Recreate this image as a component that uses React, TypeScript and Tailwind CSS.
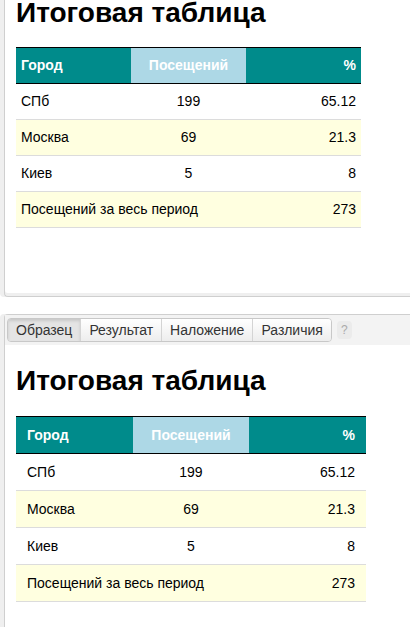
import React from 'react';

type Row = { city: string; visits: string; pct: string };

const rows: Row[] = [
  { city: 'СПб', visits: '199', pct: '65.12' },
  { city: 'Москва', visits: '69', pct: '21.3' },
  { city: 'Киев', visits: '5', pct: '8' },
];

function SummaryTable({ wide }: { wide?: boolean }) {
  const pad = wide ? 'px-[11px]' : 'px-[5px]';
  const head = wide ? 'h-[37px]' : 'h-[36px]';
  const cell = wide ? 'h-[37px]' : 'h-[36px]';
  return (
    <table className={`${wide ? 'w-[350px]' : 'w-[345px]'} table-fixed border-collapse text-[14px] text-black`}>
      <thead>
        <tr className={`${head} border-y border-black bg-[#008b8b] text-white font-bold`}>
          <th className={`${pad} text-left`}>Город</th>
          <th className={`${pad} bg-[#add8e6] text-center`}>Посещений</th>
          <th className={`${pad} text-right`}>%</th>
        </tr>
      </thead>
      <tbody>
        {rows.map((r, i) => (
          <tr key={r.city} className={`${cell} border-b border-[#dcdcdc] ${i % 2 === 1 ? 'bg-[#ffffe0]' : 'bg-white'}`}>
            <td className={`${pad} text-left`}>{r.city}</td>
            <td className={`${pad} text-center`}>{r.visits}</td>
            <td className={`${pad} text-right`}>{r.pct}</td>
          </tr>
        ))}
        <tr className={`${cell} border-b border-[#dcdcdc] bg-[#ffffe0]`}>
          <td colSpan={2} className={`${pad} text-left`}>Посещений за весь период</td>
          <td className={`${pad} text-right`}>273</td>
        </tr>
      </tbody>
    </table>
  );
}

export default function App() {
  const tabs = ['Образец', 'Результат', 'Наложение', 'Различия'];

  return (
    <div className="relative h-[627px] w-[410px] overflow-hidden bg-white font-['Liberation_Sans',Arial,sans-serif]">
      {/* sample panel */}
      <div className="-mt-[3px] ml-[4px] h-[300px] w-[420px] rounded-bl-[4px] border-b border-l border-[#cfcfcf] bg-white pl-[11px] shadow-[inset_0_-3px_0_#efefef,-4px_0_0_#efefef]">
        <h1 className="text-[28px] font-bold leading-[32px] text-black">Итоговая таблица</h1>
        <div className="mt-[18px]">
          <SummaryTable />
        </div>
      </div>

      {/* result panel with tabs */}
      <div className="ml-[4px] mt-[17px] h-[320px] w-[420px] rounded-tl-[4px] border-l border-t border-[#cfcfcf] bg-white shadow-[-4px_0_0_#efefef]">
        <div className="flex h-[30px] items-center gap-[5px] bg-[#f3f3f3] pl-[2px]">
          <div className="flex h-[24px] overflow-hidden rounded-[4px] border border-[#c8c8c8] text-[14px] text-[#333]">
            {tabs.map((t, i) => (
              <div
                key={t}
                className={`flex items-center px-[8px] ${i > 0 ? 'border-l border-[#d4d4d4]' : ''} ${
                  i === 0
                    ? 'bg-[#e4e4e4] shadow-[inset_0_2px_3px_rgba(0,0,0,0.12)]'
                    : 'bg-gradient-to-b from-white to-[#ededed]'
                }`}
              >
                {t}
              </div>
            ))}
          </div>
          <div className="flex h-[18px] w-[15px] items-center justify-center rounded-[4px] bg-[#ebebeb] text-[12px] text-[#aaa]">?</div>
        </div>
        <div className="pl-[11px] pt-[20px]">
          <h1 className="text-[28px] font-bold leading-[32px] text-black">Итоговая таблица</h1>
          <div className="mt-[19px]">
            <SummaryTable wide />
          </div>
        </div>
      </div>
    </div>
  );
}
